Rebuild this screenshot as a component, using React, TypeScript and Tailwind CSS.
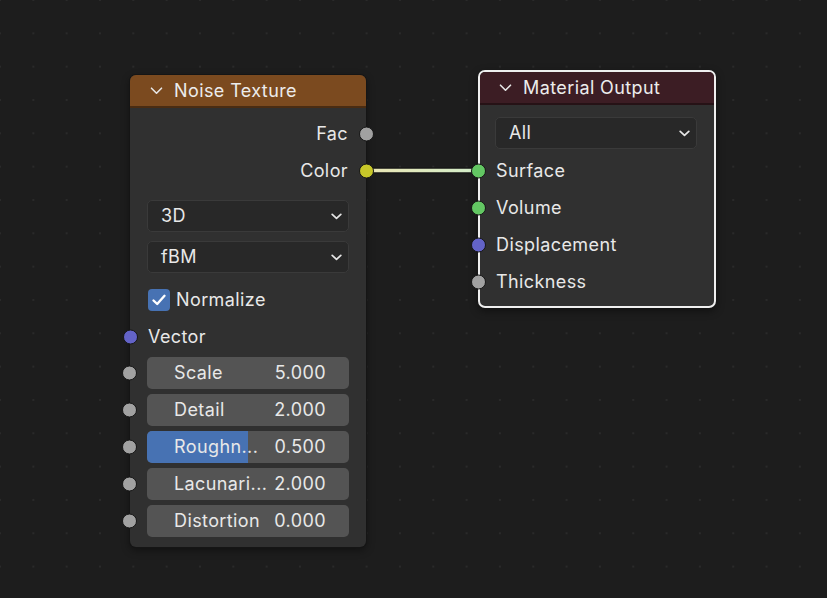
import type { ReactNode } from 'react'

const SOCKET = {
  grey: 'bg-[#a1a1a1]',
  yellow: 'bg-[#c7c729]',
  green: 'bg-[#63c763]',
  purple: 'bg-[#6363c7]',
}

function Socket({ color, offset }: { color: keyof typeof SOCKET; offset: string }) {
  return (
    <span
      className={`absolute top-1/2 -translate-y-1/2 w-[15px] h-[15px] rounded-full border-[1.5px] border-[#161616] ${SOCKET[color]} ${offset}`}
    />
  )
}

function Chevron() {
  return (
    <svg width="13" height="8" viewBox="0 0 13 8">
      <path d="M1.5 1.2 L6.5 6.2 L11.5 1.2" fill="none" stroke="#e6e6e6" strokeWidth="1.6" strokeLinecap="round" strokeLinejoin="round" />
    </svg>
  )
}

function Dropdown({ label }: { label: string }) {
  return (
    <div className="h-[32px] rounded-[5px] bg-[#282828] border border-[#3a3a3a] flex items-center justify-between pl-[13px] pr-[6px]">
      <span>{label}</span>
      <svg width="11" height="7" viewBox="0 0 11 7">
        <path d="M1.2 1.4 L5.5 5.4 L9.8 1.4" fill="none" stroke="#e6e6e6" strokeWidth="1.7" strokeLinecap="round" strokeLinejoin="round" />
      </svg>
    </div>
  )
}

function Field({ label, value, fill }: { label: string; value: string; fill?: number }) {
  return (
    <div className="relative">
      <Socket color="grey" offset="left-[-25px]" />
      <div className="relative h-[32px] rounded-[5px] bg-[#545454] overflow-hidden flex items-center justify-between pl-[27px] pr-[23px]">
        {fill !== undefined && (
          <div className="absolute left-0 top-0 bottom-0 bg-[#4772b3]" style={{ width: `${fill * 100}%` }} />
        )}
        <span className="relative">{label}</span>
        <span className="relative">{value}</span>
      </div>
    </div>
  )
}

function Row({ children, className = '' }: { children: ReactNode; className?: string }) {
  return <div className={`relative h-[37px] flex items-center ${className}`}>{children}</div>
}

export default function App() {
  return (
    <div
      className="relative w-[827px] h-[598px] overflow-hidden bg-[#1d1d1d] bg-[radial-gradient(circle,#2a2a2a_0.9px,transparent_1.4px)] bg-[length:33.33px_33.33px] bg-[position:-16.67px_-16.67px] text-[#e8e8e8] text-[18px] leading-none tracking-[0.4px]"
      style={{ fontFamily: 'Inter, "Noto Sans", sans-serif' }}
    >
      {/* link */}
      <svg className="absolute left-0 top-0" width="827" height="598">
        <defs>
          <linearGradient id="lk" x1="366" y1="0" x2="478" y2="0" gradientUnits="userSpaceOnUse">
            <stop offset="0" stopColor="#ebe6b4" />
            <stop offset="1" stopColor="#d2ecc9" />
          </linearGradient>
        </defs>
        <line x1="366" y1="170.5" x2="478" y2="170.5" stroke="#141414" strokeWidth="6" />
        <line x1="366" y1="170.5" x2="478" y2="170.5" stroke="url(#lk)" strokeWidth="3.5" />
      </svg>

      {/* Noise Texture node */}
      <div className="absolute left-[130px] top-[75px] w-[236px] h-[472px] rounded-[6px] bg-[#303030] shadow-[0_0_0_1px_#151515,0_3px_8px_rgba(0,0,0,0.45)]">
        <div className="h-[33px] rounded-t-[6px] bg-[#7b4a1f] border-b-2 border-[#4a2c12] flex items-center pl-[20px] gap-[11px] pt-[1px]">
          <Chevron />
          <span className="text-[#ececec]">Noise Texture</span>
        </div>
        <div className="flex flex-col pt-[7px]">
          <Row className="justify-end pr-[18px]">
            Fac
            <Socket color="grey" offset="right-[-7.5px]" />
          </Row>
          <Row className="justify-end pr-[18px]">
            Color
            <Socket color="yellow" offset="right-[-7.5px]" />
          </Row>
          <div className="flex flex-col px-[17px] gap-[9px] mt-[11px]">
            <Dropdown label="3D" />
            <Dropdown label="fBM" />
          </div>
          <Row className="mt-[8px] pl-[18px] gap-[6px]">
            <span className="w-[22px] h-[22px] rounded-[4px] bg-[#4772b3] flex items-center justify-center">
              <svg width="16" height="14" viewBox="0 0 16 14">
                <path d="M2.5 7.5 L6.2 11 L13.5 2.8" fill="none" stroke="#ffffff" strokeWidth="2.4" strokeLinecap="round" strokeLinejoin="round" />
              </svg>
            </span>
            Normalize
          </Row>
          <Row className="pl-[18px]">
            <Socket color="purple" offset="left-[-7.5px]" />
            Vector
          </Row>
          <div className="flex flex-col gap-[5px] px-[17px] mt-[2px]">
            <Field label="Scale" value="5.000" />
            <Field label="Detail" value="2.000" />
            <Field label="Roughn..." value="0.500" fill={0.5} />
            <Field label="Lacunari..." value="2.000" />
            <Field label="Distortion" value="0.000" />
          </div>
        </div>
      </div>

      {/* Material Output node */}
      <div className="absolute left-[478px] top-[70px] w-[238px] h-[238px] rounded-[7px] bg-[#303030] border-2 border-[#efefef] shadow-[0_3px_8px_rgba(0,0,0,0.45)]">
        <div className="h-[33px] rounded-t-[5px] bg-[#3c1d24] border-b-2 border-[#261216] flex items-center pl-[19px] gap-[11px] pt-[1px]">
          <Chevron />
          <span className="text-[#ececec]">Material Output</span>
        </div>
        <div className="flex flex-col">
          <div className="pl-[15px] pr-[17px] mt-[12px]">
            <Dropdown label="All" />
          </div>
          <div className="flex flex-col mt-[3px]">
            <Row className="pl-[16px]">
              <Socket color="green" offset="left-[-9.5px]" />
              Surface
            </Row>
            <Row className="pl-[16px]">
              <Socket color="green" offset="left-[-9.5px]" />
              Volume
            </Row>
            <Row className="pl-[16px]">
              <Socket color="purple" offset="left-[-9.5px]" />
              Displacement
            </Row>
            <Row className="pl-[16px]">
              <Socket color="grey" offset="left-[-9.5px]" />
              Thickness
            </Row>
          </div>
        </div>
      </div>
    </div>
  )
}
